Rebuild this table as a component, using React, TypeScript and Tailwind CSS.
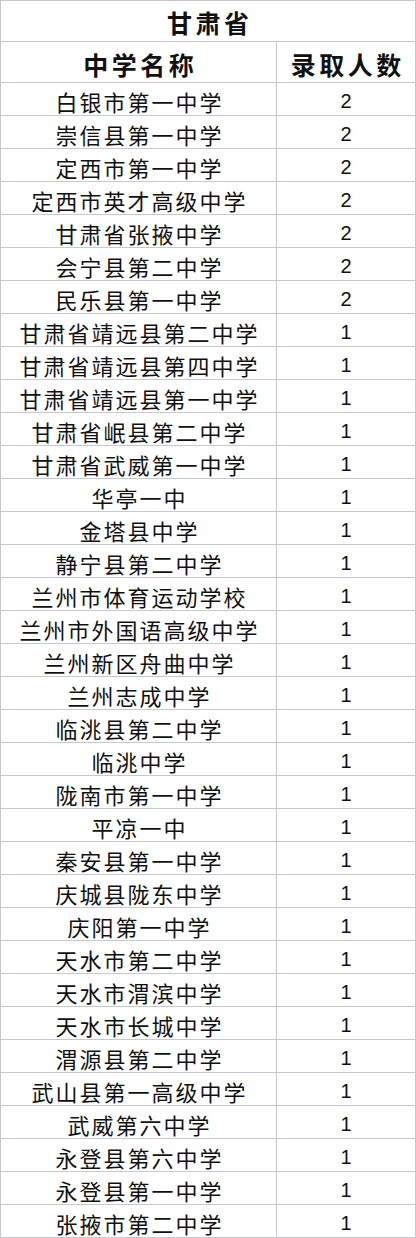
const schools: [string, number][] = [
  ["白银市第一中学", 2],
  ["崇信县第一中学", 2],
  ["定西市第一中学", 2],
  ["定西市英才高级中学", 2],
  ["甘肃省张掖中学", 2],
  ["会宁县第二中学", 2],
  ["民乐县第一中学", 2],
  ["甘肃省靖远县第二中学", 1],
  ["甘肃省靖远县第四中学", 1],
  ["甘肃省靖远县第一中学", 1],
  ["甘肃省岷县第二中学", 1],
  ["甘肃省武威第一中学", 1],
  ["华亭一中", 1],
  ["金塔县中学", 1],
  ["静宁县第二中学", 1],
  ["兰州市体育运动学校", 1],
  ["兰州市外国语高级中学", 1],
  ["兰州新区舟曲中学", 1],
  ["兰州志成中学", 1],
  ["临洮县第二中学", 1],
  ["临洮中学", 1],
  ["陇南市第一中学", 1],
  ["平凉一中", 1],
  ["秦安县第一中学", 1],
  ["庆城县陇东中学", 1],
  ["庆阳第一中学", 1],
  ["天水市第二中学", 1],
  ["天水市渭滨中学", 1],
  ["天水市长城中学", 1],
  ["渭源县第二中学", 1],
  ["武山县第一高级中学", 1],
  ["武威第六中学", 1],
  ["永登县第六中学", 1],
  ["永登县第一中学", 1],
  ["张掖市第二中学", 1],
];

const cjk = "font-['Noto_Sans_CJK_SC',sans-serif]";

export default function App() {
  return (
    <div className="w-[416px] border-l border-r border-t border-[#c6c9cf] bg-white text-[#111]">
      <div
        className={`flex h-[41px] items-start justify-center overflow-hidden border-b border-[#c6c9cf] pt-[9px] pl-[3.5px] text-[25px] leading-[25px] font-bold tracking-[3.5px] ${cjk}`}
      >
        甘肃省
      </div>

      <div className="grid h-[41px] grid-cols-[276px_1fr] overflow-hidden border-b border-[#c6c9cf]">
        <div
          className={`flex items-start justify-center border-r border-[#c6c9cf] pt-[10px] pl-[3.5px] text-[25px] leading-[25px] font-bold tracking-[3.5px] ${cjk}`}
        >
          中学名称
        </div>
        <div
          className={`flex items-start justify-center pt-[10px] pl-[3.5px] text-[25px] leading-[25px] font-bold tracking-[3.5px] ${cjk}`}
        >
          录取人数
        </div>
      </div>

      {schools.map(([name, count]) => (
        <div
          key={name}
          className="grid h-[33px] grid-cols-[276px_1fr] overflow-hidden border-b border-[#c6c9cf]"
        >
          <div
            className={`flex items-start justify-center border-r border-[#c6c9cf] pt-[7px] pl-[2px] text-[22px] leading-[22px] tracking-[2px] ${cjk}`}
          >
            {name}
          </div>
          <div className="flex items-start justify-center pt-[7px] font-['Liberation_Sans',sans-serif] text-[20px] leading-[22px]">
            {count}
          </div>
        </div>
      ))}
    </div>
  );
}
